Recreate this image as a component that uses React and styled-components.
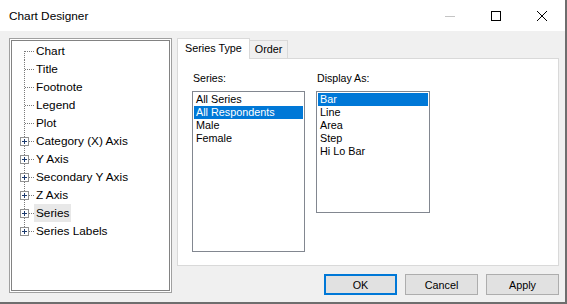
import React from "react";
import styled, { createGlobalStyle } from "styled-components";

const Global = createGlobalStyle`
  html, body { margin: 0; padding: 0; background: #f0f0f0; }
  body { font-family: "Liberation Sans", Arial, sans-serif; color: #000; }
  #root { width: 567px; height: 304px; }
`;

const Window = styled.div`
  width: 567px;
  height: 304px;
  box-sizing: border-box;
  display: flex;
  flex-direction: column;
  background: #f0f0f0;
  border-right: 2px solid #6e6e6e;
  border-bottom: 2px solid #6e6e6e;
  overflow: hidden;
`;

const TitleBar = styled.div`
  height: 31px;
  flex: none;
  background: #fff;
  display: flex;
  align-items: center;
`;

const Title = styled.div`
  flex: 1;
  padding-left: 9px;
  font-size: 11.8px;
  line-height: 14px;
  padding-top: 1px;
`;

const CaptionButton = styled.div`
  width: 46px;
  height: 31px;
  display: flex;
  align-items: center;
  justify-content: center;
`;

const Body = styled.div`
  flex: 1;
  display: flex;
  gap: 5px;
  padding: 7px 6px 0 9px;
`;

const TreeOuter = styled.div`
  width: 163px;
  height: 255px;
  box-sizing: border-box;
  border: 1px solid #a0a0a0;
  padding: 1px;
  background: #fff;
  flex: none;
`;

const TreeInner = styled.div`
  height: 100%;
  box-sizing: border-box;
  border: 1px solid #828282;
  background: #fff;
  padding-top: 1px;
`;

const TreeRow = styled.div`
  display: flex;
  align-items: center;
  height: 18px;
`;

const TreeLabel = styled.span`
  padding: 0 2px;
  height: 18px;
  line-height: 18px;
  font-size: 11.8px;
  background: ${(p) => (p.$selected ? "#e8e8e8" : "transparent")};
`;

const RightColumn = styled.div`
  width: 382px;
  display: flex;
  flex-direction: column;
`;

const TabStrip = styled.div`
  display: flex;
  align-items: flex-end;
  height: 20px;
  position: relative;
  z-index: 1;
`;

const Tab = styled.div`
  box-sizing: border-box;
  height: ${(p) => (p.$active ? "21px" : "18px")};
  margin-bottom: ${(p) => (p.$active ? "-1px" : "0")};
  padding: 0 ${(p) => (p.$active ? "7px" : "5px")};
  border: 1px solid #d9d9d9;
  border-bottom: none;
  border-left: ${(p) => (p.$first ? "1px solid #d9d9d9" : "none")};
  background: ${(p) => (p.$active ? "#fff" : "#f0f0f0")};
  font-size: 10.8px;
  line-height: ${(p) => (p.$active ? "19px" : "17px")};
  white-space: nowrap;
`;

const Panel = styled.div`
  height: 208px;
  box-sizing: border-box;
  border: 1px solid #d9d9d9;
  background: #fff;
  display: flex;
  gap: 11px;
  padding: 13px 0 0 14px;
`;

const Column = styled.div`
  display: flex;
  flex-direction: column;
  width: ${(p) => p.$w}px;
`;

const Label = styled.div`
  font-size: 10.6px;
  line-height: 13px;
  margin-bottom: 6px;
  padding-left: 1px;
`;

const ListBox = styled.div`
  box-sizing: border-box;
  height: ${(p) => p.$h}px;
  border: 1px solid #828790;
  padding: 1px;
  background: #fff;
`;

const ListItem = styled.div`
  height: 13px;
  line-height: 13px;
  font-size: 10.8px;
  padding-left: 2px;
  white-space: nowrap;
  background: ${(p) => (p.$selected ? "#0078d7" : "transparent")};
  color: ${(p) => (p.$selected ? "#fff" : "#000")};
`;

const ButtonRow = styled.div`
  display: flex;
  justify-content: flex-end;
  gap: 8px;
  margin-top: 8px;
`;

const Button = styled.div`
  width: 73px;
  height: 21px;
  box-sizing: border-box;
  background: #e1e1e1;
  border: ${(p) => (p.$default ? "2px solid #0078d7" : "1px solid #adadad")};
  display: flex;
  align-items: center;
  justify-content: center;
  font-size: 10.8px;
`;

const treeItems = [
  { label: "Chart" },
  { label: "Title" },
  { label: "Footnote" },
  { label: "Legend" },
  { label: "Plot" },
  { label: "Category (X) Axis", plus: true },
  { label: "Y Axis", plus: true },
  { label: "Secondary Y Axis", plus: true },
  { label: "Z Axis", plus: true },
  { label: "Series", plus: true, selected: true },
  { label: "Series Labels", plus: true },
];

function TreeGlyph({ first, last, plus }) {
  const y1 = first ? 9 : 0;
  const y2 = last ? 10 : 18;
  return (
    <svg width="22" height="18" viewBox="0 0 22 18" style={{ flex: "none", display: "block" }}>
      <line x1="12.5" y1={y1} x2="12.5" y2={y2} stroke="#7a7a7a" strokeDasharray="1 1" />
      <line x1="13" y1="9.5" x2="22" y2="9.5" stroke="#7a7a7a" strokeDasharray="1 1" />
      {plus && (
        <g>
          <rect x="8.5" y="5.5" width="8" height="8" fill="#fff" stroke="#919191" />
          <line x1="10" y1="9.5" x2="15" y2="9.5" stroke="#1c3a6e" />
          <line x1="12.5" y1="7" x2="12.5" y2="12" stroke="#1c3a6e" />
        </g>
      )}
    </svg>
  );
}

export default function App() {
  return (
    <>
      <Global />
      <Window>
        <TitleBar>
          <Title>Chart Designer</Title>
          <CaptionButton>
            <svg width="10" height="10" viewBox="0 0 10 10">
              <line x1="0" y1="5.5" x2="10" y2="5.5" stroke="#c4c4c4" />
            </svg>
          </CaptionButton>
          <CaptionButton>
            <svg width="10" height="10" viewBox="0 0 10 10">
              <rect x="0.5" y="0.5" width="9" height="9" fill="none" stroke="#000" />
            </svg>
          </CaptionButton>
          <CaptionButton>
            <svg width="10" height="10" viewBox="0 0 10 10">
              <path d="M0 0 L10 10 M10 0 L0 10" stroke="#000" strokeWidth="1" />
            </svg>
          </CaptionButton>
        </TitleBar>
        <Body>
          <TreeOuter>
            <TreeInner>
              {treeItems.map((it, i) => (
                <TreeRow key={it.label}>
                  <TreeGlyph first={i === 0} last={i === treeItems.length - 1} plus={it.plus} />
                  <TreeLabel $selected={it.selected}>{it.label}</TreeLabel>
                </TreeRow>
              ))}
            </TreeInner>
          </TreeOuter>
          <RightColumn>
            <TabStrip>
              <Tab $active $first>Series Type</Tab>
              <Tab>Order</Tab>
            </TabStrip>
            <Panel>
              <Column $w={113}>
                <Label>Series:</Label>
                <ListBox $h={161}>
                  <ListItem>All Series</ListItem>
                  <ListItem $selected>All Respondents</ListItem>
                  <ListItem>Male</ListItem>
                  <ListItem>Female</ListItem>
                </ListBox>
              </Column>
              <Column $w={114}>
                <Label>Display As:</Label>
                <ListBox $h={122}>
                  <ListItem $selected>Bar</ListItem>
                  <ListItem>Line</ListItem>
                  <ListItem>Area</ListItem>
                  <ListItem>Step</ListItem>
                  <ListItem>Hi Lo Bar</ListItem>
                </ListBox>
              </Column>
            </Panel>
            <ButtonRow>
              <Button $default>OK</Button>
              <Button>Cancel</Button>
              <Button>Apply</Button>
            </ButtonRow>
          </RightColumn>
        </Body>
      </Window>
    </>
  );
}
